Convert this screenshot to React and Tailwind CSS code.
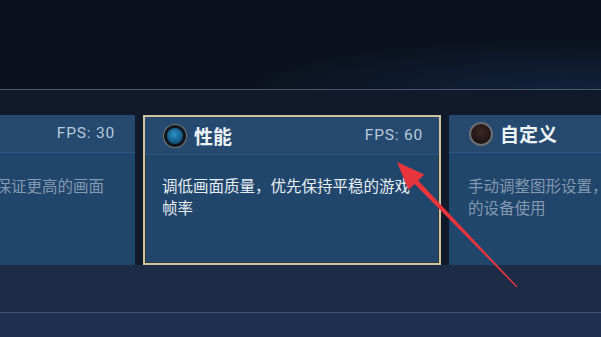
import React from 'react';

const cards = [
  {
    key: 'quality',
    title: '画质',
    fps: 'FPS: 30',
    desc: '降低帧率上限，优先保证更高的画面质量',
    selected: false,
    icon: 'blue',
    dim: true,
  },
  {
    key: 'perf',
    title: '性能',
    fps: 'FPS: 60',
    desc: '调低画面质量，优先保持平稳的游戏帧率',
    selected: true,
    icon: 'blue',
    dim: false,
  },
  {
    key: 'custom',
    title: '自定义',
    fps: '',
    desc: '手动调整图形设置，以适合不同性能的设备使用',
    selected: false,
    icon: 'dark',
    dim: true,
  },
];

function ModeIcon({ type }) {
  if (type === 'dark') {
    return (
      <div className="w-[24px] h-[24px] rounded-full bg-[#6b6f74] p-[2px] shrink-0">
        <div className="w-full h-full rounded-full bg-[radial-gradient(circle_at_50%_40%,#3a2624,#140c0c)]" />
      </div>
    );
  }
  return (
    <div className="w-[24px] h-[24px] rounded-full bg-[#7d7a6c] p-px shrink-0">
      <div className="w-full h-full rounded-full bg-[#0f1620] p-[3px]">
        <div className="w-full h-full rounded-full bg-[radial-gradient(circle_at_45%_40%,#2a92c4,#13557f_65%,#0c2f48)]" />
      </div>
    </div>
  );
}

function Card({ card }) {
  return (
    <div
      className={`w-[298px] h-[150px] shrink-0 flex flex-col ${
        card.selected
          ? 'border-2 border-[#cfc3a0] shadow-[inset_0_0_0_1px_#2e3a3a]'
          : ''
      } bg-[#21466b]`}
    >
      <div
        className={`h-[38px] flex items-center justify-between bg-[#25496f] border-b border-[#2d5680] ${
          card.selected ? 'pl-[18px] pr-[16px]' : 'pl-[20px] pr-[20px]'
        }`}
      >
        <div className="flex items-center gap-[7px]">
          <ModeIcon type={card.icon} />
          <span className="text-[19px] font-bold text-[#eef3f8] leading-none">{card.title}</span>
        </div>
        <span className="text-[15.5px] text-[#b9c9da] font-['Roboto',sans-serif] tracking-[0.8px]">
          {card.fps}
        </span>
      </div>
      <div
        className={`text-[15.5px] leading-[22px] ${
          card.selected ? 'pl-[17px] pr-[14px] pt-[19px] text-[#e6edf4]' : 'pl-[19px] pr-[16px] pt-[21px]'
        } ${card.dim ? 'text-[#8399b0]' : ''}`}
      >
        {card.desc}
      </div>
    </div>
  );
}

export default function App() {
  return (
    <div className="relative w-[601px] h-[337px] overflow-hidden bg-[#0b121e] font-['Noto_Sans_CJK_SC','Noto_Sans',sans-serif]">
      <div className="h-[89px] bg-[radial-gradient(ellipse_at_95%_100%,#11223c,#0b121e_40%)]" />
      <div className="h-px bg-[#4b5568]" />
      <div className="h-[25px] bg-[#111a2a]" />
      <div className="flex gap-[8px] ml-[-163px] h-[150px] bg-[#111a2a]">
        {cards.map((c) => (
          <Card key={c.key} card={c} />
        ))}
      </div>
      <div className="h-[47px] bg-[#1c2c47]" />
      <div className="h-px bg-[#3e5677]" />
      <div className="h-[24px] bg-[#1d3050]" />

      <svg
        className="absolute left-0 top-0 pointer-events-none"
        width="601"
        height="337"
        viewBox="0 0 601 337"
      >
        <polygon
          points="397,162 424.3,174.6 418.2,180.5 517.4,286.6 516.6,287.4 414.6,183.9 408.5,189.8"
          fill="#e8353c"
        />
      </svg>
    </div>
  );
}
